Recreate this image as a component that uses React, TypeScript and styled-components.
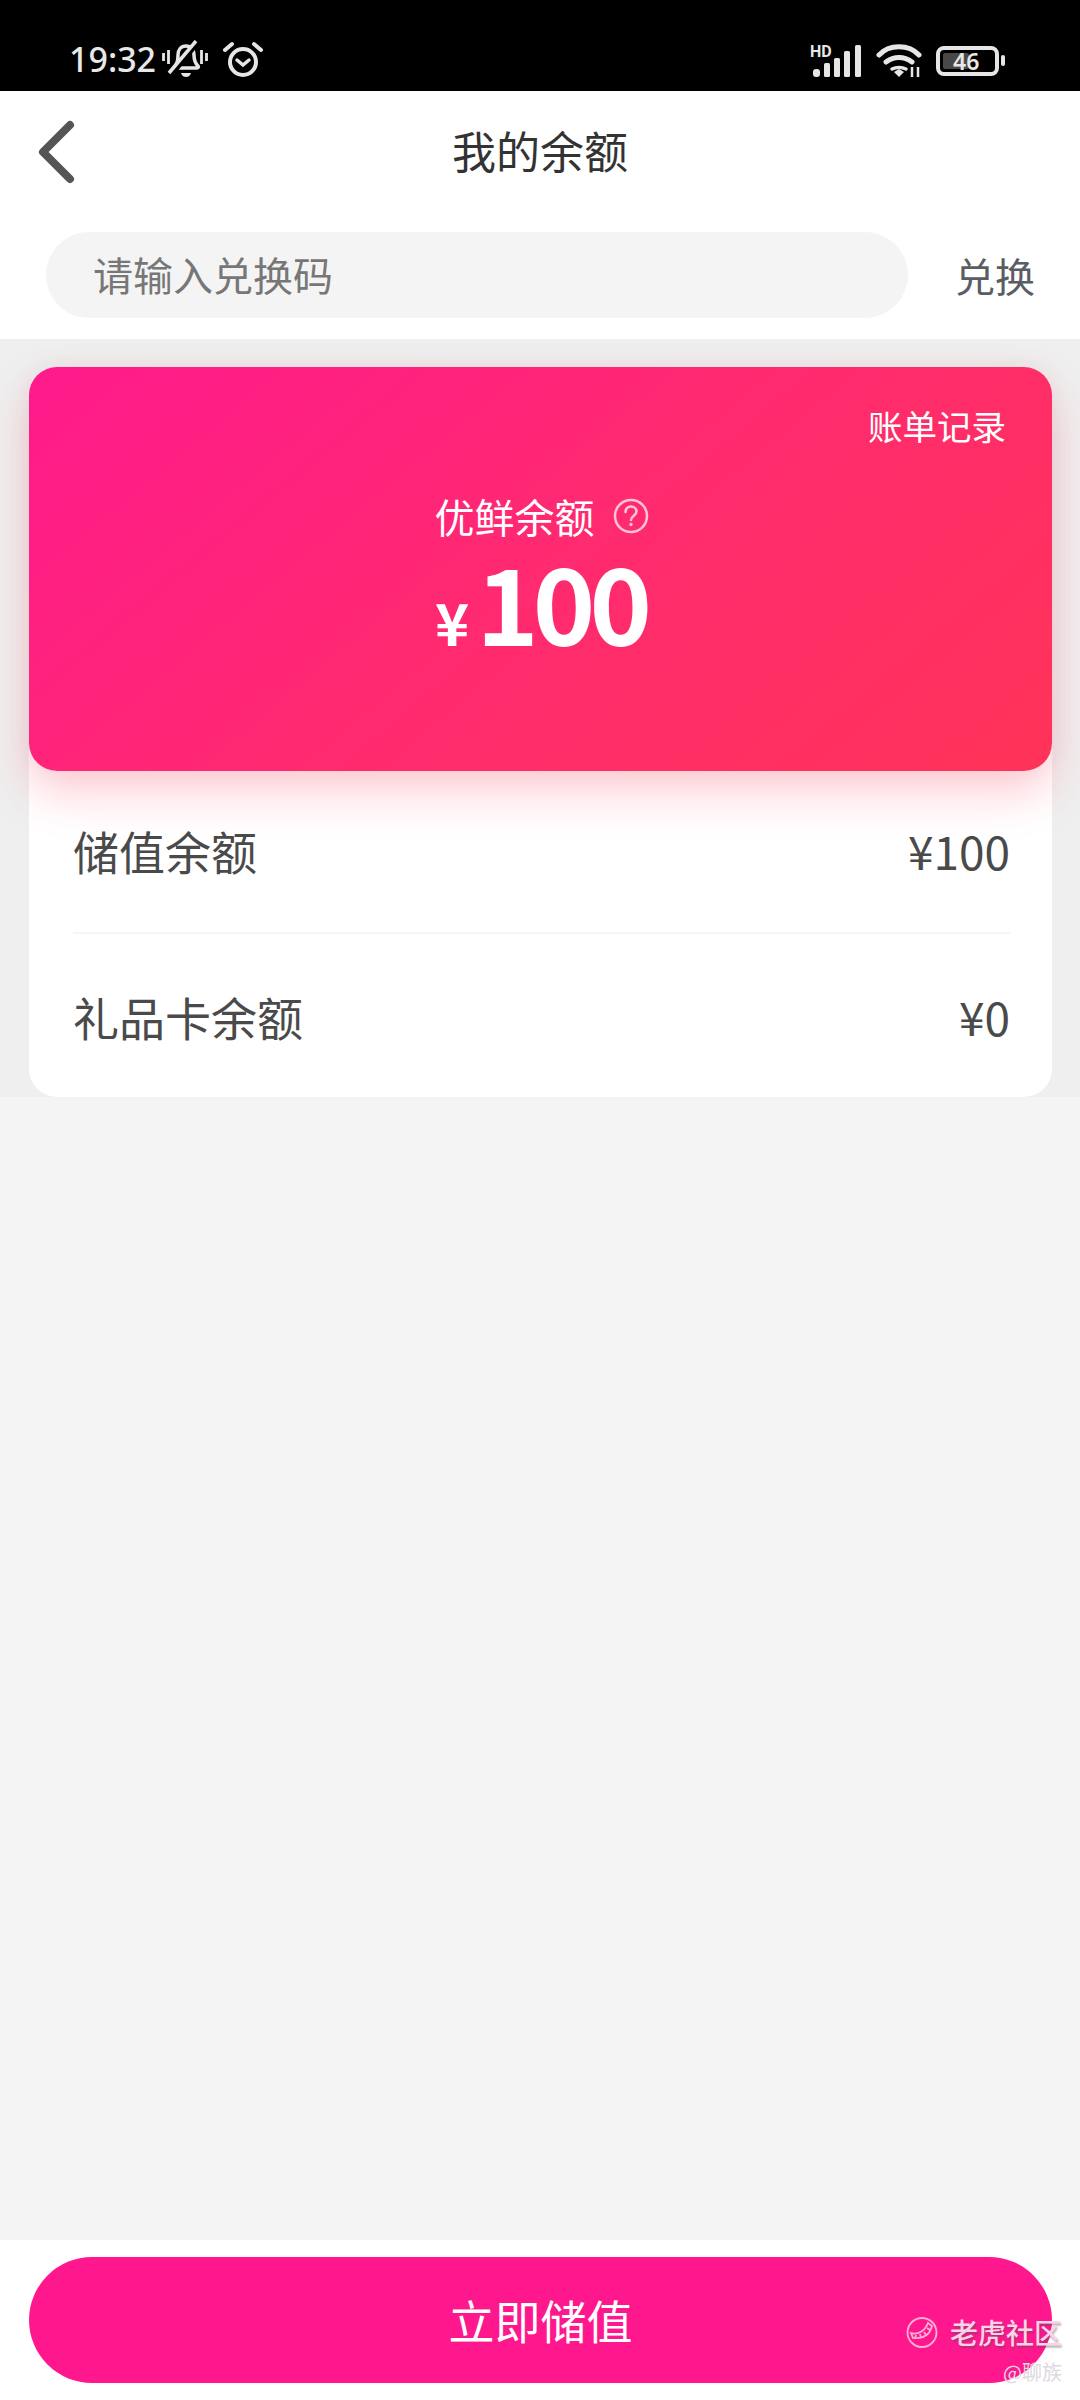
import React from 'react';
import styled, { createGlobalStyle } from 'styled-components';

const GlobalStyle = createGlobalStyle`
  html, body {
    margin: 0;
    padding: 0;
    background: #f4f4f4;
  }
  * {
    box-sizing: border-box;
  }
`;

const rows = [
  { label: '储值余额', value: '¥100' },
  { label: '礼品卡余额', value: '¥0' },
];

function BellOff() {
  return (
    <svg width="46" height="38" viewBox="0 0 46 38" fill="none" stroke="#e6e6e6" strokeWidth="3.500">
      <path d="M1.500 13v8M6.500 10v14M39.500 10v14M44.500 13v8" strokeWidth="2.800" />
      <path d="M13 26c3-3 3-6 3-11 0-5 3-9 8-9 5 0 8 4 8 9 0 5 1 8 4 11 1 1 0 2-1 2H13c-1 0-1-1 0-2z" />
      <path d="M9 36L36 3" strokeWidth="4" stroke="#000" />
      <path d="M7 33L34 1" strokeWidth="3.500" />
      <path d="M19 33h10c-1 3-3 4-5 4s-4-1-5-4z" fill="#e6e6e6" stroke="none" />
    </svg>
  );
}

function AlarmClock() {
  return (
    <svg width="40" height="37" viewBox="0 0 40 37" fill="none" stroke="#e6e6e6" strokeWidth="4" strokeLinecap="round">
      <circle cx="20" cy="21" r="13" />
      <path d="M14 19l6 5 6-5" strokeWidth="3.500" />
      <path d="M2 9l7-6M38 9l-7-6" />
    </svg>
  );
}

function Signal() {
  return (
    <SignalWrap>
      <HdMark>HD</HdMark>
      <svg width="52" height="33" viewBox="0 0 52 33" fill="#e6e6e6">
        <rect x="3" y="25" width="7" height="8" rx="3" />
        <rect x="14" y="19" width="6" height="14" rx="1.500" />
        <rect x="24" y="14" width="6" height="19" rx="1.500" />
        <rect x="34" y="7" width="6" height="26" rx="1.500" />
        <rect x="45" y="1" width="6" height="32" rx="1.500" />
      </svg>
    </SignalWrap>
  );
}

function Wifi() {
  return (
    <svg width="46" height="35" viewBox="0 0 46 35" fill="none" stroke="#e6e6e6" strokeWidth="5" strokeLinecap="round">
      <path d="M3 12C13 1 33 1 43 12" />
      <path d="M10 19c8-6 18-6 26 0" />
      <path d="M16 26c4-2 10-2 14 0" strokeWidth="3.500" />
      <path d="M18 29l5-3 5 3-5 5z" fill="#e6e6e6" stroke="none" />
      <path d="M36 24v10M42 24v10" strokeWidth="2.500" stroke="#e6e6e6" strokeLinecap="butt" />
    </svg>
  );
}

function HelpIcon() {
  return (
    <svg width="36" height="36" viewBox="0 0 36 36" fill="none" stroke="#ffc5d6" strokeWidth="2.500">
      <circle cx="18" cy="18" r="16" />
      <path d="M12.500 14c0-3.500 2.500-5.500 5.500-5.500s5.500 2 5.500 5c0 4-5.500 4.500-5.500 8.500" strokeLinecap="round" />
      <circle cx="18" cy="26.500" r="1.700" fill="#ffc5d6" stroke="none" />
    </svg>
  );
}

function WatermarkLogo() {
  return (
    <svg width="32" height="33" viewBox="0 0 32 33" fill="none" stroke="#ffb0d8" strokeWidth="1.800">
      <circle cx="16" cy="16.500" r="14.500" />
      <path d="M5 17c7 2 14-2 17-10l4 3c-2 8-8 13-19 12z" />
      <path d="M10 19l-1 3M14 18l1 4M18 16l2 3M21 12l3 2" />
    </svg>
  );
}

export default function App() {
  return (
    <Page>
      <GlobalStyle />
      <StatusBar>
        <StatusGroup>
          <Clock>19:32</Clock>
          <BellOff />
          <AlarmClock />
        </StatusGroup>
        <StatusGroup $right>
          <Signal />
          <Wifi />
          <Battery>
            <BatteryBody>
              <BatteryFill />
              <BatteryText>46</BatteryText>
            </BatteryBody>
            <BatteryNub />
          </Battery>
        </StatusGroup>
      </StatusBar>

      <NavBar>
        <BackIcon width="40" height="64" viewBox="0 0 40 64" fill="none">
          <path d="M33 5L6 32l27 27" stroke="#555" strokeWidth="8" strokeLinecap="round" strokeLinejoin="round" />
        </BackIcon>
        <Title>我的余额</Title>
      </NavBar>

      <SearchRow>
        <SearchInput>请输入兑换码</SearchInput>
        <Redeem>兑换</Redeem>
      </SearchRow>

      <Section>
        <Panel>
          <Hero>
            <BillLink>账单记录</BillLink>
            <HeroLabel>
              优鲜余额
              <HelpIcon />
            </HeroLabel>
            <HeroAmount>
              <Yen>¥</Yen>
              <Big>100</Big>
            </HeroAmount>
          </Hero>
          {rows.map((row, i) => (
            <Row key={row.label} $first={i === 0}>
              <span>{row.label}</span>
              <span>{row.value}</span>
            </Row>
          ))}
        </Panel>
      </Section>

      <Spacer />

      <Footer>
        <TopUp>立即储值</TopUp>
      </Footer>

      <Watermark>
        <WatermarkBrand>
          <WatermarkLogo />
          老虎社区
        </WatermarkBrand>
        <WatermarkUser>@聊族</WatermarkUser>
      </Watermark>
    </Page>
  );
}

const Page = styled.div`
  position: relative;
  width: 1080px;
  height: 2400px;
  display: flex;
  flex-direction: column;
  overflow: hidden;
  background: #f4f4f4;
  font-family: 'Noto Sans CJK SC', 'Noto Sans', sans-serif;
`;

const StatusBar = styled.div`
  height: 91px;
  background: #000;
  display: flex;
  justify-content: space-between;
  align-items: flex-end;
  padding: 0 75px 13px 69px;
  flex-shrink: 0;
`;

const StatusGroup = styled.div<{ $right?: boolean }>`
  display: flex;
  align-items: center;
  gap: ${(p) => (p.$right ? '14px' : '15px')};
`;

const Clock = styled.span`
  color: #e8e8e8;
  font-family: 'Noto Sans', sans-serif;
  font-size: 34px;
  font-weight: 500;
  line-height: 37px;
  margin-right: -9px;
`;

const SignalWrap = styled.div`
  position: relative;
  width: 52px;
  height: 33px;
  display: flex;
`;

const HdMark = styled.span`
  position: absolute;
  left: 0;
  top: 0;
  color: #e6e6e6;
  font-family: Roboto, sans-serif;
  font-size: 16px;
  font-weight: 700;
  line-height: 16px;
`;

const Battery = styled.div`
  display: flex;
  align-items: center;
  gap: 2px;
`;

const BatteryBody = styled.div`
  position: relative;
  width: 63px;
  height: 30px;
  border: 4px solid #e6e6e6;
  border-radius: 8px;
  padding: 3px;
  display: flex;
  align-items: center;
`;

const BatteryFill = styled.div`
  width: 26px;
  height: 100%;
  background: #484848;
  border-radius: 2px;
`;

const BatteryText = styled.span`
  position: absolute;
  left: 13px;
  top: -4px;
  color: #e8e8e8;
  font-family: 'Noto Sans', sans-serif;
  font-size: 23px;
  line-height: 30px;
  font-weight: 600;
`;

const BatteryNub = styled.div`
  width: 4px;
  height: 11px;
  background: #e6e6e6;
  border-radius: 2px;
`;

const NavBar = styled.div`
  position: relative;
  height: 123px;
  background: #fff;
  display: flex;
  align-items: center;
  justify-content: center;
  flex-shrink: 0;
`;

const BackIcon = styled.svg`
  position: absolute;
  left: 37px;
  top: 29px;
`;

const Title = styled.div`
  color: #333;
  font-size: 44px;
  line-height: 60px;
  margin-bottom: 5px;
`;

const SearchRow = styled.div`
  height: 125px;
  background: #fff;
  display: flex;
  align-items: flex-start;
  padding: 18px 46px 0;
  justify-content: space-between;
  flex-shrink: 0;
`;

const SearchInput = styled.div`
  width: 862px;
  height: 86px;
  border-radius: 43px;
  background: #f4f4f4;
  color: #777;
  font-size: 40px;
  line-height: 84px;
  padding-left: 47px;
`;

const Redeem = styled.div`
  color: #5a5d63;
  font-size: 40px;
  line-height: 86px;
  margin-right: -1px;
`;

const Section = styled.div`
  background: #efefef;
  padding: 28px 28px 0 29px;
  flex-shrink: 0;
`;

const Panel = styled.div`
  background: #fff;
  border-radius: 28px;
`;

const Hero = styled.div`
  position: relative;
  height: 404px;
  border-radius: 28px;
  background: linear-gradient(140deg, #ff1a8c 0%, #ff2a70 50%, #ff3358 100%);
  box-shadow: 0 22px 46px rgba(255, 50, 80, 0.24), 0 0 26px rgba(0, 0, 0, 0.05);
  display: flex;
  flex-direction: column;
  align-items: center;
  color: #fff;
  padding-top: 122px;
`;

const BillLink = styled.div`
  position: absolute;
  top: 34px;
  right: 46px;
  font-size: 34.500px;
  line-height: 48px;
`;

const HeroLabel = styled.div`
  display: flex;
  align-items: center;
  gap: 18px;
  font-size: 40px;
  line-height: 54px;
  color: #fff;
  margin-left: 2px;
`;

const HeroAmount = styled.div`
  display: flex;
  align-items: baseline;
  line-height: 100px;
  margin-top: 7px;
`;

const Yen = styled.span`
  font-size: 58px;
  line-height: 100px;
  font-weight: 700;
  margin-right: 7px;
`;

const Big = styled.span`
  font-size: 106px;
  line-height: 100px;
  font-weight: 700;
  letter-spacing: -6px;
`;

const Row = styled.div<{ $first?: boolean }>`
  height: 163px;
  margin: 0 42px 0 44px;
  padding-bottom: ${(p) => (p.$first ? '4px' : '0')};
  display: flex;
  justify-content: space-between;
  align-items: center;
  color: #4a4a4a;
  font-size: 46px;
  border-bottom: ${(p) => (p.$first ? '2px solid #f5f5f5' : 'none')};
`;

const Spacer = styled.div`
  flex: 1;
`;

const Footer = styled.div`
  height: 160px;
  background: #fff;
  padding: 17px 28px 0 29px;
  flex-shrink: 0;
`;

const TopUp = styled.div`
  height: 126px;
  border-radius: 63px;
  background: #ff178e;
  color: #fff;
  font-size: 46px;
  line-height: 124px;
  text-align: center;
`;

const Watermark = styled.div`
  position: absolute;
  right: 18px;
  top: 2312px;
  display: flex;
  flex-direction: column;
  align-items: flex-end;
`;

const WatermarkBrand = styled.div`
  display: flex;
  align-items: center;
  gap: 12px;
  color: #fbd3e8;
  font-size: 28px;
  font-weight: 500;
  line-height: 40px;
  text-shadow: 1px 2px 2px rgba(80, 80, 80, 0.45);
`;

const WatermarkUser = styled.div`
  color: #e0d8e0;
  font-size: 20px;
  line-height: 24px;
  margin-top: 8px;
`;
